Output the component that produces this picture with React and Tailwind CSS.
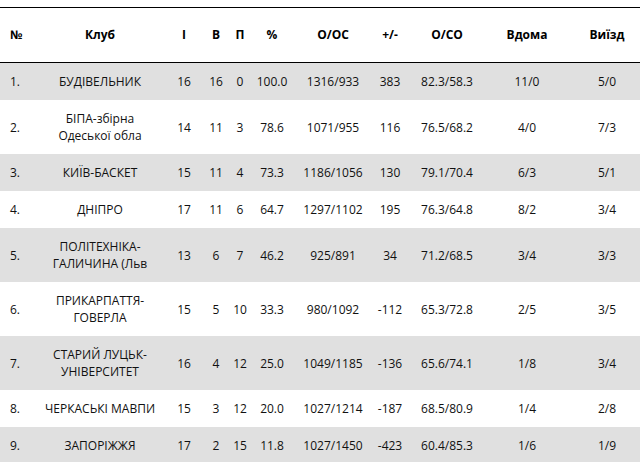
import React from "react";

const rows = [
  ["1.", ["БУДІВЕЛЬНИК"], "16", "16", "0", "100.0", "1316/933", "383", "82.3/58.3", "11/0", "5/0"],
  ["2.", ["БІПА-збірна", "Одеської обла"], "14", "11", "3", "78.6", "1071/955", "116", "76.5/68.2", "4/0", "7/3"],
  ["3.", ["КИЇВ-БАСКЕТ"], "15", "11", "4", "73.3", "1186/1056", "130", "79.1/70.4", "6/3", "5/1"],
  ["4.", ["ДНІПРО"], "17", "11", "6", "64.7", "1297/1102", "195", "76.3/64.8", "8/2", "3/4"],
  ["5.", ["ПОЛІТЕХНІКА-", "ГАЛИЧИНА (Льв"], "13", "6", "7", "46.2", "925/891", "34", "71.2/68.5", "3/4", "3/3"],
  ["6.", ["ПРИКАРПАТТЯ-", "ГОВЕРЛА"], "15", "5", "10", "33.3", "980/1092", "-112", "65.3/72.8", "2/5", "3/5"],
  ["7.", ["СТАРИЙ ЛУЦЬК-", "УНІВЕРСИТЕТ"], "16", "4", "12", "25.0", "1049/1185", "-136", "65.6/74.1", "1/8", "3/4"],
  ["8.", ["ЧЕРКАСЬКІ МАВПИ"], "15", "3", "12", "20.0", "1027/1214", "-187", "68.5/80.9", "1/4", "2/8"],
  ["9.", ["ЗАПОРІЖЖЯ"], "17", "2", "15", "11.8", "1027/1450", "-423", "60.4/85.3", "1/6", "1/9"],
];

const headers = ["№", "Клуб", "І", "В", "П", "%", "О/ОС", "+/-", "О/СО", "Вдома", "Виїзд"];

const grid =
  "grid grid-cols-[28px_144px_24px_40px_8px_56px_66px_48px_66px_94px_66px]";

export default function App() {
  return (
    <div className="w-[640px] h-[462px] overflow-hidden bg-white font-['Open_Sans',sans-serif] text-[12px] text-[#111] pt-[7px]">
      <div className={`${grid} h-[56px] border-t border-b border-black font-bold text-black`}>
        {headers.map((h, i) => (
          <div
            key={i}
            className={
              i === 0
                ? "flex items-center justify-start pl-[10px] whitespace-nowrap"
                : "flex items-center justify-center whitespace-nowrap"
            }
          >
            {h}
          </div>
        ))}
      </div>
      {rows.map((r, ri) => (
        <div
          key={ri}
          className={`${grid} leading-[17px] ${ri % 2 === 0 ? "bg-[#e0e0e0]" : "bg-white"}`}
        >
          {r.map((c, ci) => {
            if (ci === 0)
              return (
                <div key={ci} className="flex items-center justify-start pl-[10px] py-[10px] whitespace-nowrap">
                  {c}
                </div>
              );
            if (ci === 1)
              return (
                <div key={ci} className="flex flex-col items-center justify-center py-[10px] text-center">
                  {c.map((l, li) => (
                    <span key={li} className="whitespace-nowrap">
                      {l}
                    </span>
                  ))}
                </div>
              );
            return (
              <div key={ci} className="flex items-center justify-center py-[10px] whitespace-nowrap">
                <span>{c}</span>
              </div>
            );
          })}
        </div>
      ))}
    </div>
  );
}
